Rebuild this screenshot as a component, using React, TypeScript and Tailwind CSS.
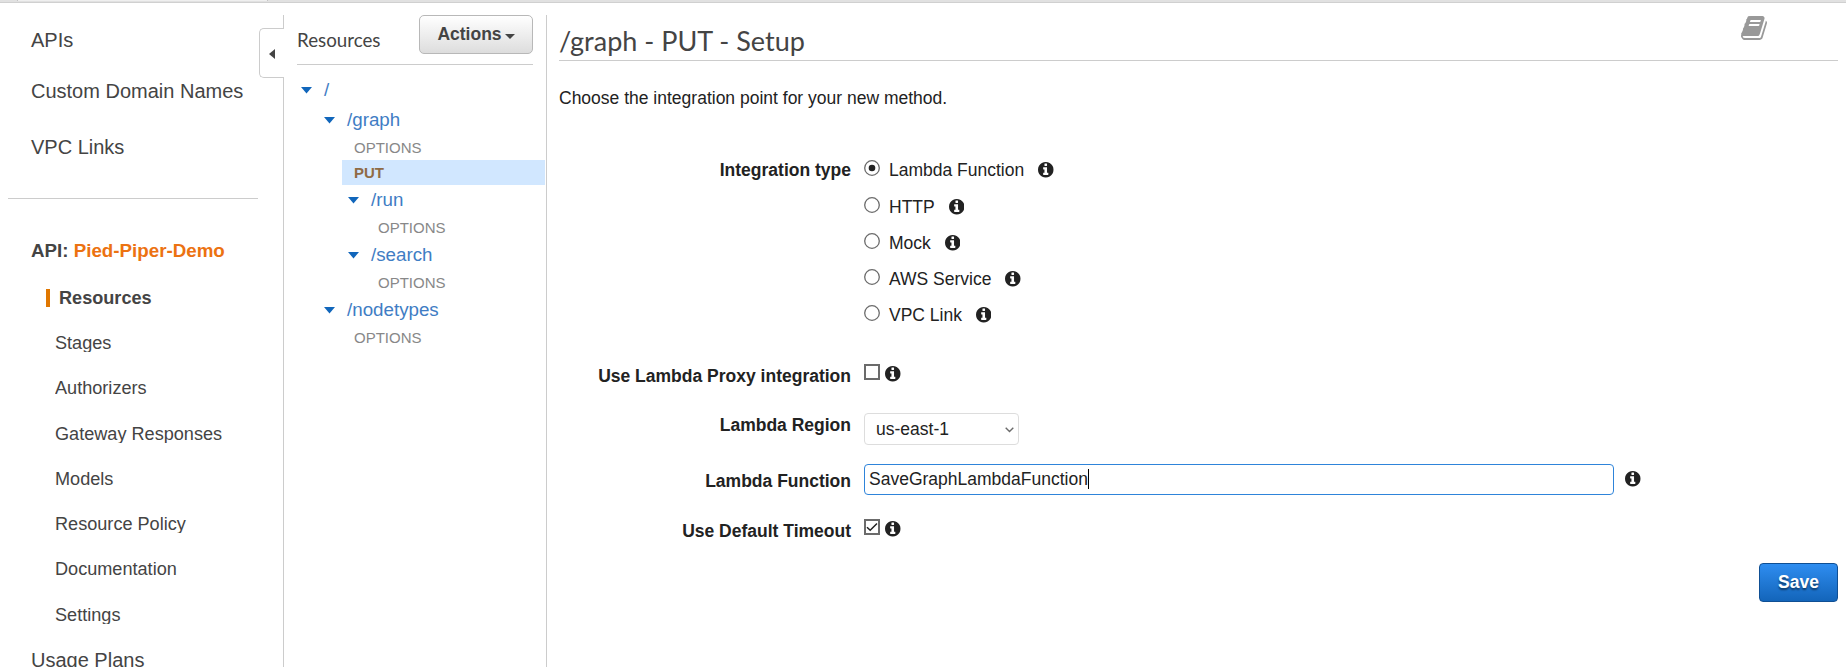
import React from "react";

const sideItems = [
  { label: "Stages", gap: "mt-[27px]" },
  { label: "Authorizers", gap: "mt-[27px]" },
  { label: "Gateway Responses", gap: "mt-[28px]" },
  { label: "Models", gap: "mt-[27px]" },
  { label: "Resource Policy", gap: "mt-[27px]" },
  { label: "Documentation", gap: "mt-[27px]" },
  { label: "Settings", gap: "mt-[28px]" },
];

const integrationTypes = [
  { label: "Lambda Function", row: "h-[37px]", checked: true },
  { label: "HTTP", row: "h-[36px]", checked: false },
  { label: "Mock", row: "h-[36px]", checked: false },
  { label: "AWS Service", row: "h-[36px]", checked: false },
  { label: "VPC Link", row: "h-[36px]", checked: false },
];

function InfoIcon({ className = "" }: { className?: string }) {
  return (
    <svg viewBox="128 128 1536 1536" className={"size-[15.5px] shrink-0 fill-[#222] " + className}>
      <path d="M1152 1376v-160q0-14-9-23t-23-9h-96v-512q0-14-9-23t-23-9h-320q-14 0-23 9t-9 23v160q0 14 9 23t23 9h96v320h-96q-14 0-23 9t-9 23v160q0 14 9 23t23 9h448q14 0 23-9t9-23zm-128-896v-160q0-14-9-23t-23-9h-192q-14 0-23 9t-9 23v160q0 14 9 23t23 9h192q14 0 23-9t9-23zm640 416q0 209-103 385.5t-279.5 279.5-385.5 103-385.5-103-279.5-279.5-103-385.5 103-385.5 279.5-279.5 385.5-103 385.5 103 279.5 279.5 103 385.5z" />
    </svg>
  );
}

function BookIcon() {
  return (
    <svg viewBox="64 128 1664 1536" className="h-[24px] w-[26px] fill-[#999]">
      <path d="M1703 478q40 57 18 129l-275 906q-19 64-76.5 107.5t-122.5 43.5h-923q-77 0-148.5-53.5t-99.5-131.5q-24-67-2-127 0-4 3-27t4-37q1-8-3-21.5t-3-19.5q2-11 8-21t16.5-23.5 16.5-23.5q23-38 45-91.5t30-91.5q3-10 .5-30t-.5-28q3-11 17-28t17-23q21-36 42-92t25-90q1-9-2.5-32t.5-28q4-13 22-30.5t22-22.5q19-26 42.5-84.5t27.5-96.5q1-8-3-25.5t-2-26.5q2-8 9-18t18-23 17-21q8-12 16.5-30.5t15-35 16-36 19.5-32 26.5-23.5 36-11.5 47.5 5.5l-1 3q38-9 51-9h761q74 0 114 56t18 130l-274 906q-36 119-71.5 153.5t-128.5 34.5h-869q-27 0-38 15-11 16-1 43 24 70 144 70h923q29 0 56-15.5t35-41.5l300-987q7-22 5-57 38 15 59 43zm-1064 2q-4 13 2 22.5t20 9.5h608q13 0 25.5-9.5t16.5-22.5l21-64q4-13-2-22.5t-20-9.5h-608q-13 0-25.5 9.5t-16.5 22.5zm-83 256q-4 13 2 22.5t20 9.5h608q13 0 25.5-9.5t16.5-22.5l21-64q4-13-2-22.5t-20-9.5h-608q-13 0-25.5 9.5t-16.5 22.5z" />
    </svg>
  );
}

function Checkbox({ checked }: { checked?: boolean }) {
  return (
    <svg viewBox="0 0 16 16" className="size-4 shrink-0 fill-none">
      <rect x="1" y="1" width="14" height="14" fill="#fff" stroke="#6b6b6b" strokeWidth="2" />
      {checked && <path d="M3 8.2 L6.2 11.3 L13 4.5" stroke="#222" strokeWidth="1.5" />}
    </svg>
  );
}

function Radio({ checked }: { checked: boolean }) {
  return (
    <svg viewBox="0 0 16 16" className="size-4 shrink-0 fill-white">
      <circle cx="8" cy="8" r="7.3" stroke="#6b6b6b" strokeWidth="1.3" />
      {checked && <circle cx="8" cy="8" r="3.3" fill="#222" />}
    </svg>
  );
}

function Resource({ label, indent }: { label: string; indent: string }) {
  return (
    <div className={"flex h-[30px] items-center " + indent}>
      <svg viewBox="0 0 11 7" className="mt-px h-[7px] w-[11px] fill-[#146eb4]">
        <path d="M0 0H11L5.5 6.5z" fill="#1166bb" />
      </svg>
      <span className="ml-[12px] text-[18.75px] leading-[30px] text-[#3f7dc4]">{label}</span>
    </div>
  );
}

function Method({ label, indent, active }: { label: string; indent: string; active?: boolean }) {
  return (
    <div className={"h-[25px] pl-[12px] text-[15px] leading-[25px] " + indent + (active ? " bg-[#d1e7ff] font-bold text-[#8f6b45]" : " text-[#888]")}>
      {label}
    </div>
  );
}

function Label({ children }: { children: React.ReactNode }) {
  return <label className="w-[292px] shrink-0 text-right font-bold">{children}</label>;
}

export default function App() {
  return (
    <div className="flex h-[667px] w-[1846px] flex-col overflow-hidden bg-white font-['Liberation_Sans',Arial,sans-serif] text-[17.5px] leading-[20px] text-[#222]">
      <div className="flex h-[3px] shrink-0 border-b border-[#d0d0d0] bg-[#e1e1e1]">
        <div className="ml-[17px] h-px w-[251px] border-x border-[#c4c4c4] bg-[#efefef]" />
      </div>

      <div className="flex min-h-0 flex-1">
        <nav className="w-[259px] shrink-0 pt-[25px] text-[#444]">
          <div className="pl-[31px] text-[20px] leading-[24px]">
            <div>APIs</div>
            <div className="mt-[27px]">Custom Domain Names</div>
            <div className="mt-[32px]">VPC Links</div>
          </div>
          <hr className="mt-[39px] ml-[8px] w-[250px] border-[#ccc]" />
          <div className="mt-[40px] pl-[31px] text-[18.75px] leading-[24px] font-bold">
            API: <span className="text-[#ec7211]">Pied-Piper-Demo</span>
          </div>
          <div className="mt-[26px] ml-[46px] h-[18px] border-l-4 border-[#e07700] pl-[9px] text-[18.125px] leading-[18px] font-bold">
            Resources
          </div>
          <div className="pl-[55px] text-[18.125px] leading-[18px]">
            {sideItems.map((item) => (
              <div key={item.label} className={"h-[18px] overflow-hidden " + item.gap}>
                {item.label}
              </div>
            ))}
          </div>
          <div className="mt-[24px] pl-[31px] text-[20px] leading-[24px]">Usage Plans</div>
        </nav>

        <div className="flex w-[25px] shrink-0 flex-col pt-[12px]">
          <div className="h-[13px] border-r border-[#ccc]" />
          <div className="flex h-[50px] items-center rounded-l-[5px] border border-r-0 border-[#ccc] pl-[9px]">
            <svg viewBox="0 0 6 10" className="mt-px h-[10px] w-[6px]">
              <path d="M6 0V10L0 5z" fill="#444" />
            </svg>
          </div>
          <div className="flex-1 border-r border-[#ccc]" />
        </div>

        <section className="mt-[12px] w-[263px] shrink-0 border-r border-[#ccc]">
          <div className="ml-[13px] flex h-[50px] w-[236px] items-start justify-between border-b border-[#ccc]">
            <h2 className="mt-[13px] font-[Lato] text-[18.75px] leading-[24px] text-[#444]">Resources</h2>
            <button className="flex h-[39px] w-[114px] items-start justify-center rounded-[5px] border border-[#b8b8b8] bg-linear-to-b from-white to-[#dddddd] pt-[8px] font-bold text-[#444]">
              Actions
              <svg viewBox="0 0 10 5" className="mt-[10px] ml-[3px] h-[5px] w-[10px]">
                <path d="M0 0H10L5 5z" fill="#444" />
              </svg>
            </button>
          </div>
          <div className="pt-[10px] pr-px">
            <Resource label="/" indent="pl-[17px]" />
            <Resource label="/graph" indent="pl-[40px]" />
            <Method label="OPTIONS" indent="ml-[58px]" />
            <Method label="PUT" indent="ml-[58px]" active />
            <Resource label="/run" indent="pl-[64px]" />
            <Method label="OPTIONS" indent="ml-[82px]" />
            <Resource label="/search" indent="pl-[64px]" />
            <Method label="OPTIONS" indent="ml-[82px]" />
            <Resource label="/nodetypes" indent="pl-[40px]" />
            <Method label="OPTIONS" indent="ml-[58px]" />
          </div>
        </section>

        <main className="flex-1 pt-[12px] pr-[8px] pl-[12px]">
          <header className="flex h-[46px] items-start justify-between border-b border-[#ccc]">
            <h1 className="mt-[9px] font-[Lato] text-[27px] leading-[34px] text-[#444]">/graph - PUT - Setup</h1>
            <div className="mt-px mr-[71px]">
              <BookIcon />
            </div>
          </header>
          <p className="mt-[27px]">Choose the integration point for your new method.</p>

          <form>
            <div className="mt-[52px] flex">
              <Label>Integration type</Label>
              <div className="ml-[13px]">
                {integrationTypes.map((t) => (
                  <div key={t.label} className={"flex items-start " + t.row}>
                    <Radio checked={t.checked} />
                    <span className="ml-[9px]">{t.label}</span>
                    <InfoIcon className="mt-[2px] ml-[14px]" />
                  </div>
                ))}
              </div>
            </div>
            <div className="mt-[23px] flex h-[49px] items-start">
              <Label>
                <span className="block pt-[2px]">Use Lambda Proxy integration</span>
              </Label>
              <div className="ml-[13px] flex items-start">
                <Checkbox />
                <InfoIcon className="mt-[2px] ml-[5px]" />
              </div>
            </div>
            <div className="flex h-[51px] items-start">
              <Label>
                <span className="block pt-[2px]">Lambda Region</span>
              </Label>
              <div className="ml-[13px] flex h-[32px] w-[155px] items-start justify-between rounded-[4px] border border-[#ddd] pt-[5px] pr-[4px] pl-[11px]">
                us-east-1
                <svg viewBox="0 0 9 6" className="mt-[8px] h-[6px] w-[9px] fill-none stroke-[#6b6b6b]">
                  <path d="M.7 .8 L4.5 4.6 L8.3 .8" strokeWidth="1.4" />
                </svg>
              </div>
            </div>
            <div className="flex h-[55px] items-start">
              <Label>
                <span className="block pt-[7px]">Lambda Function</span>
              </Label>
              <div className="ml-[13px] flex h-[31px] w-[750px] items-start rounded-[4px] border border-[#2e84da] pt-[4px] pl-[4px]">
                SaveGraphLambdaFunction
                <span className="h-[20px] w-px bg-black" />
              </div>
              <InfoIcon className="mt-[7px] ml-[11px]" />
            </div>
            <div className="flex h-[44px] items-start">
              <Label>
                <span className="block pt-[2px]">Use Default Timeout</span>
              </Label>
              <div className="ml-[13px] flex items-start">
                <Checkbox checked />
                <InfoIcon className="mt-[2px] ml-[5px]" />
              </div>
            </div>
            <div className="flex justify-end">
              <button
                type="button"
                className="flex h-[39px] w-[79px] items-start justify-center rounded-[4px] border border-[#0f4f94] bg-linear-to-b from-[#2e8df0] to-[#1365ba] pt-[8px] font-bold text-white [text-shadow:0_2px_2px_rgba(0,0,0,0.5)]"
              >
                Save
              </button>
            </div>
          </form>
        </main>
      </div>
    </div>
  );
}
